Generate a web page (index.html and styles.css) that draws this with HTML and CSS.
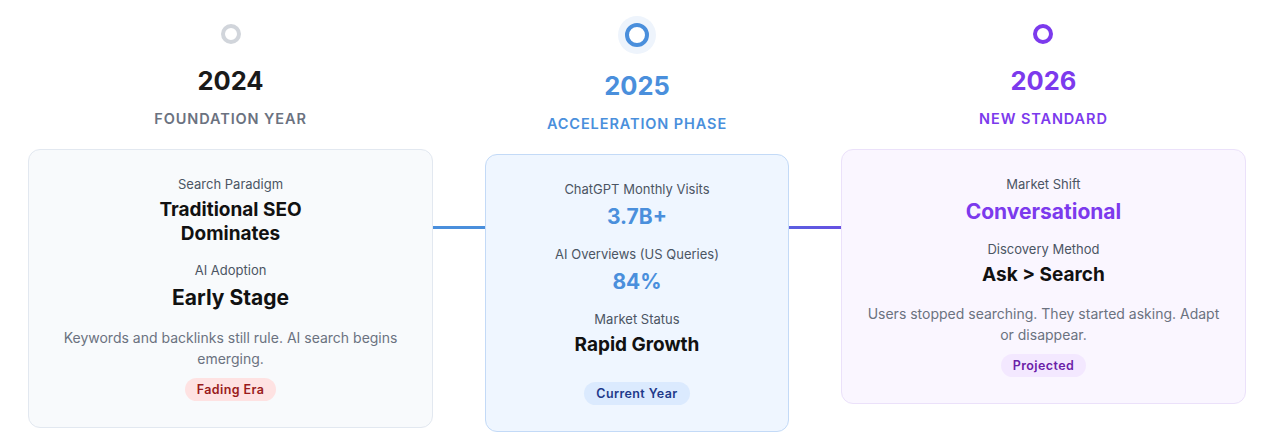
FILE: index.html
```html
<!DOCTYPE html>
<html lang="en">
<head>
<meta charset="utf-8">
<title>AI Search Timeline</title>
<link rel="stylesheet" href="styles.css">
</head>
<body>
<div class="timeline">
  <section class="phase phase-past">
    <div class="dot"></div>
    <div class="year">2024</div>
    <div class="phase-name">Foundation Year</div>
    <div class="card">
      <div class="stat">
        <div class="label">Search Paradigm</div>
        <div class="value">Traditional SEO<br>Dominates</div>
      </div>
      <div class="stat">
        <div class="label">AI Adoption</div>
        <div class="value value-lg">Early Stage</div>
      </div>
      <p class="desc">Keywords and backlinks still rule. AI search begins emerging.</p>
      <span class="badge">Fading Era</span>
    </div>
  </section>

  <div class="connector connector-a"></div>

  <section class="phase phase-now">
    <div class="dot"></div>
    <div class="year">2025</div>
    <div class="phase-name">Acceleration Phase</div>
    <div class="card">
      <div class="stat">
        <div class="label">ChatGPT Monthly Visits</div>
        <div class="value value-hl">3.7B+</div>
      </div>
      <div class="stat">
        <div class="label">AI Overviews (US Queries)</div>
        <div class="value value-hl">84%</div>
      </div>
      <div class="stat">
        <div class="label">Market Status</div>
        <div class="value">Rapid Growth</div>
      </div>
      <span class="badge">Current Year</span>
    </div>
  </section>

  <div class="connector connector-b"></div>

  <section class="phase phase-next">
    <div class="dot"></div>
    <div class="year">2026</div>
    <div class="phase-name">New Standard</div>
    <div class="card">
      <div class="stat">
        <div class="label">Market Shift</div>
        <div class="value value-hl">Conversational</div>
      </div>
      <div class="stat">
        <div class="label">Discovery Method</div>
        <div class="value">Ask &gt; Search</div>
      </div>
      <p class="desc">Users stopped searching. They started asking. Adapt or disappear.</p>
      <span class="badge">Projected</span>
    </div>
  </section>
</div>
</body>
</html>
```

FILE: styles.css
```css
* { box-sizing: border-box; }

html, body {
  margin: 0;
  background: #ffffff;
}

body {
  font-family: Inter, "Liberation Sans", Arial, sans-serif;
  color: #111111;
  -webkit-font-smoothing: antialiased;
}

.timeline {
  display: grid;
  grid-template-columns: 1fr 52px 0.75fr 52px 1fr;
  align-items: start;
  padding: 0 34px 0 28px;
}

.phase {
  display: flex;
  flex-direction: column;
  align-items: center;
  text-align: center;
}

.dot {
  width: 20px;
  height: 20px;
  border-radius: 50%;
  border: 4px solid #d1d5db;
  background: #ffffff;
  margin-top: 24px;
}

.phase-now .dot {
  width: 24px;
  height: 24px;
  margin-top: 23px;
  margin-bottom: 2px;
  border-color: #4a8fdc;
  box-shadow: 0 0 0 7px #eef4fc;
}

.phase-next .dot {
  border-color: #7c3aed;
}

.year {
  margin-top: 21px;
  font-size: 25.5px;
  line-height: 32px;
  font-weight: 700;
  color: #1a1a1a;
}

.phase-now .year { color: #4a8fdc; }
.phase-next .year { color: #7c3aed; }

.phase-name {
  margin-top: 13px;
  font-size: 14.5px;
  line-height: 18px;
  font-weight: 600;
  letter-spacing: 0.9px;
  text-transform: uppercase;
  color: #6b7280;
}

.phase-now .phase-name { color: #4a8fdc; }
.phase-next .phase-name { color: #7c3aed; }

.card {
  align-self: stretch;
  margin-top: 21px;
  padding: 25px 22px 26px;
  border-radius: 12px;
  border: 1px solid #e2e8f0;
  background: #f8fafc;
  display: flex;
  flex-direction: column;
  align-items: center;
}

.phase-now .card {
  background: #eff6ff;
  border-color: #c3daf7;
}

.phase-next .card {
  background: #faf6ff;
  border-color: #ebe1fa;
}

.stat {
  margin-bottom: 15px;
}

.label {
  font-size: 13px;
  line-height: 19px;
  color: #4b5563;
}

.value {
  margin-top: 4px;
  font-size: 19px;
  line-height: 24px;
  font-weight: 700;
  color: #111111;
}

.value-lg {
  margin-top: 5px;
  font-size: 21px;
  line-height: 26px;
}

.value-hl {
  margin-top: 5px;
  font-size: 21px;
  line-height: 26px;
}

.phase-now .value-hl { color: #4a8fdc; }
.phase-next .value-hl { color: #7c3aed; }

.desc {
  margin: 1px 0 0;
  font-size: 14px;
  line-height: 21px;
  color: #6b7280;
}

.badge {
  display: inline-block;
  margin-top: 9px;
  padding: 0 12px;
  height: 23px;
  line-height: 23px;
  border-radius: 999px;
  font-size: 12.5px;
  font-weight: 600;
  letter-spacing: 0.4px;
  background: #fee2e2;
  color: #991b1b;
}

.phase-now .badge {
  margin-top: 10px;
  background: #dbeafe;
  color: #1e3a8a;
}

.phase-next .badge {
  background: #f3e8ff;
  color: #6b21a8;
}

.connector {
  height: 3px;
  margin-top: 226px;
}

.connector-a { background: #4a8fdc; }
.connector-b { background: linear-gradient(90deg, #5a5fe0, #6650e2); }
```
